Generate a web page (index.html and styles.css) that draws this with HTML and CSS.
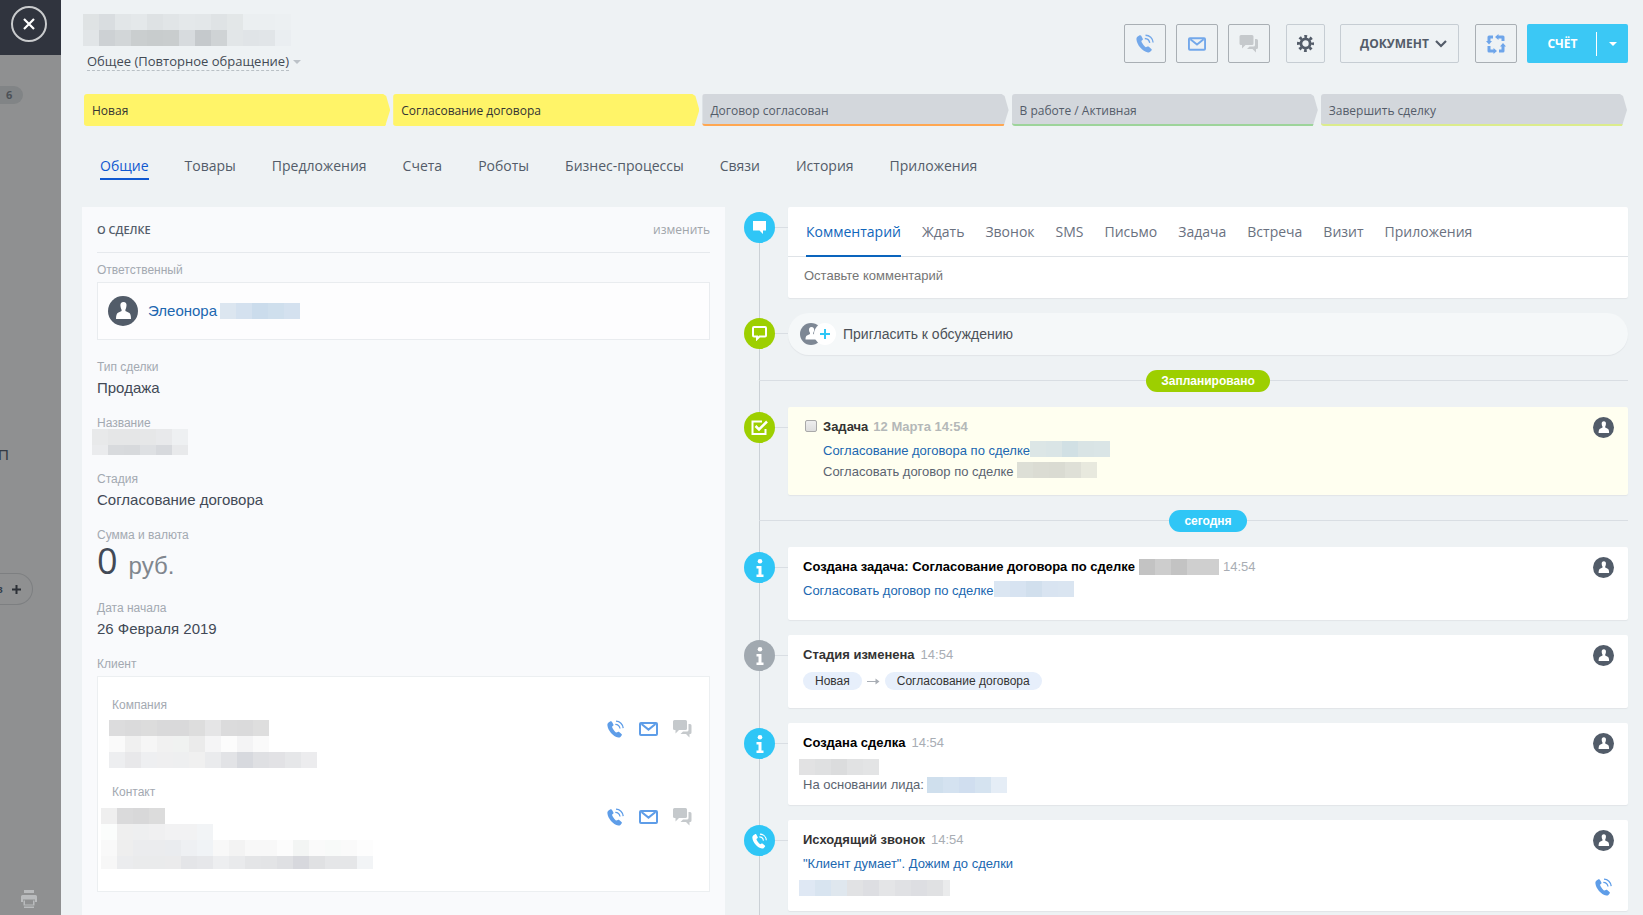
FILE: index.html
```html
<!DOCTYPE html>
<html lang="ru">
<head>
<meta charset="utf-8">
<title>Сделка</title>
<link rel="stylesheet" href="styles.css">
</head>
<body>
<svg class="sprite" aria-hidden="true">
  <symbol id="i-phone" viewBox="0 0 17 18">
    <path d="M1.600 2.400 3.400 1.300c.6-.3 1.200-.2 1.500.4l1.500 2.700c.3.5.2 1-.3 1.400L5 6.700c.2 1.300 2.700 5 4.300 5.900l1.500-.7c.5-.3 1-.2 1.400.2l2.300 2c.5.4.5 1 .1 1.500l-1.200 1.300c-.6.6-1.300.8-2.100.6C6 16.500.8 10.200.4 5.200.3 4 .7 3 1.600 2.400z" fill="currentColor"/>
    <path d="M9 1.200c3.800.1 6.900 2.900 7.200 6.900M8.300 4.300c2.500.1 4.300 1.800 4.700 4.200" fill="none" stroke="currentColor" stroke-width="1.300"/>
  </symbol>
  <symbol id="i-mail" viewBox="0 0 19 14">
    <rect x="1" y="1" width="17" height="12" rx="1" fill="none" stroke="currentColor" stroke-width="2"/>
    <path d="M2.500 2l7 5.600 7-5.600" fill="none" stroke="currentColor" stroke-width="2"/>
  </symbol>
  <symbol id="i-chat" viewBox="0 0 19 18">
    <path d="M1.500 0h11Q14 0 14 1.500v7Q14 10 12.500 10H6l-3.500 3.500V10H1.500Q0 10 0 8.500v-7Q0 0 1.500 0z" fill="currentColor"/>
    <path d="M15.500 4h1.500q1.500 0 1.500 1.500v7q0 1.500-1.500 1.500h-.5v3.500L13 14H7.500L10 11.500h4q1.500 0 1.500-1.500z" fill="currentColor"/>
  </symbol>
  <symbol id="i-user" viewBox="0 0 30 30">
    <circle cx="15" cy="15" r="15" fill="currentColor"/>
    <path d="M15.500 6c2.200 0 3.200 1.500 3 3.500-.1 2-.7 3.200-1.100 4.200v1.300l3.600 1.800c1.500.8 2 3 2 6.200H8c0-3.200.6-5.400 2-6.200l3.600-1.800v-1.300c-.5-1-1.100-2.200-1.200-4.200-.1-2 .9-3.500 3.100-3.500z" fill="#fff"/>
  </symbol>
  <symbol id="i-info" viewBox="0 0 10 18">
    <circle cx="5" cy="2.300" r="2.300" fill="currentColor"/>
    <path d="M1.500 7h5v8.500h2V18h-7v-2.500h2v-6h-2z" fill="currentColor"/>
  </symbol>
</svg>

<div class="app">
  <aside class="rail">
    <div class="rail-top">
      <button class="close" type="button" aria-label="Закрыть"><svg width="12" height="12" viewBox="0 0 12 12"><path d="M1 1l10 10M11 1L1 11" stroke="#fff" stroke-width="2.200"/></svg></button>
    </div>
    <span class="rail-badge">6</span>
    <span class="rail-letter">П</span>
    <span class="rail-pill"><b>в</b><svg width="9" height="9" viewBox="0 0 9 9"><path d="M4.500 0v9M0 4.500h9" stroke="#2d3037" stroke-width="2"/></svg></span>
    <svg class="rail-print" width="16" height="18" viewBox="0 0 16 18"><path d="M3 0h10v3H3zM1.500 5h13Q16 5 16 6.500V12h-2V9.500H2V12H0V6.500Q0 5 1.500 5zM2.500 10.500h1.500V14.500h8v-4h1.500V15.500h-11zM3 16.500h10V18H3z" fill="#b9bbbd"/></svg>
  </aside>

  <main class="page">
    <header class="head">
      <div class="head-title">
        <span class="mosaic" data-rows="dfe3e4 d9dde0 e2e6e8 e4e8ea dee2e4 e1e5e7 e4e8ea e3e7e9 dfe3e5 e3e7e8 ebeff1 ebeff1 ecf0f2|e1e5e7 cdd1d4 d2d6d8 cacecf c8cccd c9cdce d7dbde c5c9cc cfd3d5 e2e6e8 e0e4e7 e1e5e8 eaeef1"></span>
        <button class="funnel" type="button"><span>Общее (Повторное обращение)</span></button>
      </div>
      <div class="actions">
        <button class="btn btn-icon" type="button" aria-label="Позвонить"><svg class="c-blue" width="18" height="19"><use href="#i-phone"/></svg></button>
        <button class="btn btn-icon" type="button" aria-label="Письмо"><svg class="c-blue" width="18" height="14"><use href="#i-mail"/></svg></button>
        <button class="btn btn-icon" type="button" aria-label="Чат"><svg class="c-grey" width="20" height="18"><use href="#i-chat"/></svg></button>
        <button class="btn btn-gear" type="button" aria-label="Настройки"><svg width="17" height="17" viewBox="0 0 17 17"><circle cx="8.500" cy="8.500" r="4.600" fill="none" stroke="#535c69" stroke-width="2.800"/><circle cx="8.500" cy="8.500" r="7" fill="none" stroke="#535c69" stroke-width="3" stroke-dasharray="2.750 2.748" stroke-dashoffset="1.370"/></svg></button>
        <button class="btn btn-doc" type="button">ДОКУМЕНТ <svg width="12" height="8" viewBox="0 0 12 8"><path d="M1 1l5 5 5-5" fill="none" stroke="#535c69" stroke-width="2.200"/></svg></button>
        <button class="btn btn-icon btn-frame" type="button" aria-label="Автоматизация"><svg width="20" height="20" viewBox="0 0 20 20"><g fill="none" stroke="#6ea5ea" stroke-width="3" stroke-linejoin="round"><path d="M7 3H3V8"/><path d="M12 3h5V7"/><path d="M17 11v6H13"/><path d="M3 12v5H8"/></g><path d="M0 7h6L3 10.500zM12.500 0v6L9 3zM20 12.500h-6L17 9zM7.500 20v-6l3.500 3z" fill="#6ea5ea"/></svg></button>
        <div class="split"><button class="split-main" type="button">СЧЁТ</button><button class="split-more" type="button" aria-label="Ещё"></button></div>
      </div>
    </header>

    <div class="stages">
      <button class="stage stage-done" type="button">Новая</button>
      <button class="stage stage-done" type="button">Согласование договора</button>
      <button class="stage stage-orange" type="button">Договор согласован</button>
      <button class="stage stage-green" type="button">В работе / Активная</button>
      <button class="stage stage-lime" type="button">Завершить сделку</button>
    </div>

    <nav class="tabs">
      <a class="tab tab-active" href="#">Общие</a><a class="tab" href="#">Товары</a><a class="tab" href="#">Предложения</a><a class="tab" href="#">Счета</a><a class="tab" href="#">Роботы</a><a class="tab" href="#">Бизнес-процессы</a><a class="tab" href="#">Связи</a><a class="tab" href="#">История</a><a class="tab" href="#">Приложения</a>
    </nav>

    <div class="columns">
      <section class="deal">
        <div class="deal-head"><h2>О СДЕЛКЕ</h2><a href="#">изменить</a></div>
        <div class="field">
          <div class="label">Ответственный</div>
          <div class="owner"><svg class="c-dark" width="30" height="30"><use href="#i-user"/></svg><a href="#">Элеонора</a><span class="mosaic" data-rows="dce6f0 d4e1ef cbdcec cfdfed d4e1ef"></span></div>
        </div>
        <div class="field"><div class="label">Тип сделки</div><div class="value">Продажа</div></div>
        <div class="field"><div class="label">Название</div><div class="value value-hidden"><span class="mosaic" data-rows="e8e9ea e5e6e7 e5e6e7 e6e7e8 e8e9eb eef0f2|eaebed d8dadd d7d9dc dee0e3 d7d9dd e8e9eb"></span></div></div>
        <div class="field"><div class="label">Стадия</div><div class="value">Согласование договора</div></div>
        <div class="field"><div class="label">Сумма и валюта</div><div class="money"><span>0</span><small>руб.</small></div></div>
        <div class="field"><div class="label">Дата начала</div><div class="value">26 Февраля 2019</div></div>
        <div class="field">
          <div class="label">Клиент</div>
          <div class="client">
            <div class="label">Компания</div>
            <div class="client-row">
              <span class="mosaic" data-rows="dcdcdd dadadb dcdcdc d9d9da d9d9da dddddd e5e5e6 dbdbdc dadadb dedede|fafafa f0f0f0 f6f6f6 f1f1f1 f0f2f1 ebebeb f5f5f6 fcfcfc f4f4f5 fafafa|edeef0 e8e8ea eeeff1 efeff0 eeeff0 f0f0f0 eaebed e2e3e6 d7d9de dfe0e3 e2e2e5 e6e7e9 ececee"></span>
              <span class="contacts"><svg class="c-link" width="17" height="18"><use href="#i-phone"/></svg><svg class="c-link" width="19" height="14"><use href="#i-mail"/></svg><svg class="c-grey" width="19" height="18"><use href="#i-chat"/></svg></span>
            </div>
            <div class="label">Контакт</div>
            <div class="client-row client-row-wide">
              <span class="mosaic" data-rows="efefef dadadb d8d8d9 dcdcdc|fbfdfc efefef eeeff0 f0f0f1 f2f2f3 f2f2f3 f2f4f6|f9f9f9 eeeeee ebecee ebecee eaecef eef0f3 f0f3f6 f8f8f8 f3f3f3 f8f8f8 f8f8f8 fcfcfc f3f5f4 fafafa f8faf9 fafafa fdfdfd|f7f7f7 ebecee eaebec eaebec ebebec e4e5e8 e6e7ea edeef0 e9eaec e4e5e7 e3e4e6 dfe0e3 d7d8dd e0e1e3 e5e6e8 e5e6e8 f2f4f6"></span>
              <span class="contacts"><svg class="c-link" width="17" height="18"><use href="#i-phone"/></svg><svg class="c-link" width="19" height="14"><use href="#i-mail"/></svg><svg class="c-grey" width="19" height="18"><use href="#i-chat"/></svg></span>
            </div>
          </div>
        </div>
      </section>

      <section class="timeline">
        <div class="item">
          <span class="dot dot-blue"><svg width="13" height="13" viewBox="0 0 13 13"><path d="M0 0h13v9.500h-3V13L6.500 9.500H0z" fill="#fff"/></svg></span>
          <div class="card composer">
            <nav class="ctabs"><a class="ctab ctab-active" href="#">Комментарий</a><a class="ctab" href="#">Ждать</a><a class="ctab" href="#">Звонок</a><a class="ctab" href="#">SMS</a><a class="ctab" href="#">Письмо</a><a class="ctab" href="#">Задача</a><a class="ctab" href="#">Встреча</a><a class="ctab" href="#">Визит</a><a class="ctab" href="#">Приложения</a></nav>
            <input class="comment" type="text" placeholder="Оставьте комментарий" aria-label="Комментарий">
          </div>
        </div>
        <div class="item">
          <span class="dot dot-green"><svg width="15" height="15" viewBox="0 0 15 15"><path d="M2 1h11q1 0 1 1v7.500q0 1-1 1H7.500L5 13v-2.500H2q-1 0-1-1V2q0-1 1-1z" fill="none" stroke="#fff" stroke-width="2"/></svg></span>
          <button class="invite" type="button">
            <svg width="36" height="22" viewBox="0 0 36 22"><circle cx="11" cy="11" r="11" fill="#7d8794"/><path d="M11.500 4c2 0 2.800 1.500 2.600 3-.1 1.500-.6 2-.9 3v1l3 1.500c1.200.6 1.500 2 1.500 4H5.500c0-2 .4-3.400 1.500-4l3-1.500v-1c-.4-1-.9-1.500-1-3-.1-1.500.5-3 2.500-3z" fill="#fff"/><circle cx="25" cy="11" r="11" fill="#fff"/><path d="M25 6v10M20 11h10" stroke="#2fc6f6" stroke-width="2"/></svg>
            Пригласить к обсуждению
          </button>
        </div>
        <div class="divider"><span class="pill pill-green">Запланировано</span></div>
        <div class="item">
          <span class="dot dot-green"><svg width="17" height="16" viewBox="0 0 17 16"><path d="M11 1.500H1.500v12.500h13V9" fill="none" stroke="#fff" stroke-width="2"/><path d="M4.500 6l3.500 3.500L16 1.500" fill="none" stroke="#fff" stroke-width="2.500"/></svg></span>
          <div class="card card-task">
            <div class="task-check"><input type="checkbox" id="task"></div>
            <div class="body">
              <div class="title"><label for="task">Задача</label><time class="time-soft">12 Марта 14:54</time></div>
              <div class="line line-link"><a href="#">Согласование договора по сделке</a><span class="mosaic" data-rows="dce6e6 dae5e6 d1e0e4 d9e4e5 dae5e6"></span></div>
              <div class="line">Согласовать договор по сделке<span class="mosaic mosaic-near" data-rows="dddfd6 dbdcd3 dadbd2 dfe0d7 e8e9de"></span></div>
            </div>
            <svg class="c-dark avatar" width="21" height="21"><use href="#i-user"/></svg>
          </div>
        </div>
        <div class="divider"><span class="pill pill-blue">сегодня</span></div>
        <div class="item">
          <span class="dot dot-blue"><svg width="10" height="18"><use href="#i-info"/></svg></span>
          <div class="card card-info">
            <div class="body">
              <div class="title title-black">Создана задача: Согласование договора по сделке<span class="mosaic mosaic-gap" data-rows="c3c3c3 cdcdcd c3c3c3 cfcfcf cfcfcf"></span><time class="time-near">14:54</time></div>
              <div class="line line-link"><a href="#">Согласовать договор по сделке</a><span class="mosaic" data-rows="dbe6f2 d7e3f1 d1dfed d9e4f1 dae5f1"></span></div>
            </div>
            <svg class="c-dark avatar" width="21" height="21"><use href="#i-user"/></svg>
          </div>
        </div>
        <div class="item">
          <span class="dot dot-grey"><svg width="10" height="18"><use href="#i-info"/></svg></span>
          <div class="card card-info">
            <div class="body">
              <div class="title">Стадия изменена<time>14:54</time></div>
              <div class="move"><span class="chip">Новая</span><svg width="13" height="8" viewBox="0 0 13 8"><path d="M0 4.500h10" stroke="#a8adb4" fill="none"/><path d="M8.500 1.500l4 3-4 3z" fill="#a8adb4"/></svg><span class="chip">Согласование договора</span></div>
            </div>
            <svg class="c-dark avatar" width="21" height="21"><use href="#i-user"/></svg>
          </div>
        </div>
        <div class="item">
          <span class="dot dot-blue"><svg width="10" height="18"><use href="#i-info"/></svg></span>
          <div class="card card-created">
            <div class="body">
              <div class="title title-black">Создана сделка<time>14:54</time></div>
              <span class="mosaic mosaic-out" data-rows="e2e2e3 dfe0e1 dbdcdd e1e2e3 e3e4e5"></span>
              <div class="line line-tight">На основании лида:<span class="mosaic mosaic-near" data-rows="cfdfed d4e2f0 d0deef d5e3f0 e5edf6"></span></div>
            </div>
            <svg class="c-dark avatar" width="21" height="21"><use href="#i-user"/></svg>
          </div>
        </div>
        <div class="item">
          <span class="dot dot-blue"><svg class="c-white" width="15" height="16"><use href="#i-phone"/></svg></span>
          <div class="card card-call">
            <div class="body">
              <div class="title">Исходящий звонок<time>14:54</time></div>
              <div class="line line-link"><a href="#">"Клиент думает". Дожим до сделки</a></div>
              <span class="mosaic mosaic-out mosaic-call" data-rows="dfe8f4 d8e4f0 dfe7ee e1e2e4 dddee2 e4e5e7 e0e1e4 dddee2 e0e1e3 eaebec"></span>
            </div>
            <div class="side"><svg class="c-dark" width="21" height="21"><use href="#i-user"/></svg><svg class="c-link" width="17" height="18"><use href="#i-phone"/></svg></div>
          </div>
        </div>
      </section>
    </div>
  </main>
</div>
<script src="mosaic.js"></script>
</body>
</html>
```
FILE: styles.css
```css
* { box-sizing: border-box; }
body { margin: 0; font: 13px/18px "Liberation Sans", Arial, sans-serif; color: #333; }
button { font: inherit; color: inherit; border: 0; padding: 0; margin: 0; background: none; cursor: pointer; }
a { color: #2067b0; text-decoration: none; }
svg { display: block; flex: none; }
.sprite { position: absolute; width: 0; height: 0; }
.c-blue { color: #73a8ea; }
.c-link { color: #5e9de8; }
.c-grey { color: #c5c9cc; }
.c-dark { color: #525c69; }
.c-white { color: #fff; }

.mosaic { display: inline-flex; flex-direction: column; flex: none; }
.mosaic-row { display: flex; height: 16px; }
.mosaic-cell { width: 16px; }
.mosaic-gap { margin-left: 4px; }
.mosaic-near { margin-left: 3px; }
.mosaic-out { margin-left: -4px; }

.app { display: flex; height: 100vh; overflow: hidden; background: #eef2f4; }

.rail { width: 61px; flex: none; background: #8f9091; display: flex; flex-direction: column; align-items: flex-start; }
.rail-top { width: 100%; height: 55px; background: #30343e; padding: 6px 0 0 11px; }
.close { width: 36px; height: 36px; border: 2px solid #c9cbcd; border-radius: 50%; display: flex; align-items: center; justify-content: center; }
.rail-badge { margin-top: 31px; width: 23px; height: 18px; padding-left: 6px; border-radius: 0 9px 9px 0; background: #818486; font: bold 11px/18px "Open Sans", sans-serif; color: #4c5157; }
.rail-letter { margin: 342px 0 0 -2px; font-size: 15px; line-height: 18px; color: #333a44; }
.rail-pill { margin-top: 109px; width: 33px; height: 32px; border: 1px solid #7d7f81; border-left: 0; border-radius: 0 16px 16px 0; display: flex; align-items: center; gap: 9px; font-size: 11px; color: #33404e; }
.rail-pill b { margin-left: -4px; }
.rail-print { margin: auto 0 7px 21px; }

.page { flex: 1; min-width: 0; padding: 0 15px 0 21px; display: flex; flex-direction: column; }
.head { display: flex; justify-content: space-between; height: 94px; padding: 14px 0 0 1px; }
.head-title { display: flex; flex-direction: column; align-items: flex-start; gap: 7px; }
.funnel { margin-left: 4px; display: flex; align-items: center; gap: 4px; font: 13px/17px "Open Sans", sans-serif; color: #434a54; }
.funnel span { border-bottom: 1px dashed #b9c0c5; }
.funnel::after { content: ""; border: 4px solid transparent; border-top-color: #bcc2c8; border-bottom: 0; }

.actions { display: flex; height: 39px; margin-top: 10px; }
.btn { height: 39px; border: 1px solid #c6cdd3; border-radius: 2px; display: flex; align-items: center; justify-content: center; }
.btn-icon { width: 42px; border-color: #a9afb4; margin-right: 10px; }
.btn-gear { width: 39px; margin: 0 15px 0 6px; }
.btn-doc { width: 119px; gap: 6px; padding-left: 8px; font: bold 12px/18px "Open Sans", sans-serif; color: #535c69; }
.btn-frame { margin-left: 16px; }
.split { width: 101px; display: flex; align-items: center; border-radius: 2px; background: #3bc8f5; color: #fff; }
.split-main { flex: 1; height: 100%; padding-left: 2px; font: bold 12px/18px "Open Sans", sans-serif; }
.split-more { width: 32px; height: 24px; border-left: 1px solid #fff; display: flex; align-items: center; justify-content: center; }
.split-more::after { content: ""; border: 4px solid transparent; border-top-color: #fff; border-bottom: 0; }

.stages { display: grid; grid-template-columns: repeat(5, 1fr); gap: 3px; padding: 0 1px 0 2px; }
.stage { height: 32px; padding: 3px 8px 0; text-align: left; font: 12px/27px "Open Sans", sans-serif; color: #535c69; background: #d3d7dc; border-bottom: 2px solid; border-radius: 3px 0 0 3px; clip-path: polygon(0 0, calc(100% - 7px) 0, calc(100% - 4px) 2px, 100% 50%, calc(100% - 5px) 100%, 0 100%); }
.stage-done { background: #fff468; border-color: #fff468; color: #333; }
.stage-orange { border-color: #ffa751; }
.stage-green { border-color: #9dd49a; }
.stage-lime { border-color: #dbec8c; }

.tabs { display: flex; gap: 36px; margin: 28px 0 27px 18px; }
.tab { font: 14px/24px "Open Sans", sans-serif; color: #535c69; border-bottom: 2px solid transparent; }
.tab-active { color: #1058d0; border-color: #1058d0; }

.columns { flex: 1; min-height: 0; display: grid; grid-template-columns: 643fr 884fr; gap: 19px; }
.deal { background: #f9fafc; padding: 0 15px; min-width: 0; }
.deal-head { display: flex; justify-content: space-between; align-items: center; height: 46px; border-bottom: 1px solid #e6e9ed; margin-bottom: 9px; }
.deal-head h2 { margin: 0; font: 600 11px/18px "Open Sans", sans-serif; color: #535c69; }
.deal-head a { font: 12px/18px "Open Sans", sans-serif; color: #a0a5aa; }
.field { margin-bottom: 17px; }
.label { font-size: 12px; line-height: 16px; color: #a3a9b1; }
.value { margin-top: 3px; font-size: 15px; line-height: 20px; color: #424956; }
.value-hidden { display: flex; align-items: flex-start; height: 20px; }
.value-hidden .mosaic { margin: -5px 0 0 -5px; }
.value-hidden .mosaic-row:last-child { height: 10px; }
.money { display: flex; align-items: baseline; gap: 11px; height: 40px; font: 36px/36px "Open Sans", sans-serif; color: #424956; }
.money small { font: 24px/24px "Liberation Sans", Arial, sans-serif; color: #80868e; }
.owner { display: flex; align-items: center; height: 58px; margin: 4px 0 19px; padding: 0 10px; border: 1px solid #e9ecef; background: #fdfdfe; font-size: 15px; }
.owner a { margin: 0 3px 0 10px; }
.client { margin-top: 4px; padding: 20px 18px 22px 14px; border: 1px solid #eceff1; background: #fff; }
.client-row { display: flex; justify-content: space-between; align-items: flex-start; margin: 7px 0 16px -3px; }
.client-row-wide { margin: 8px 0 0 -11px; }
.client-row-wide .mosaic-row:last-child { height: 13px; }
.contacts { display: flex; align-items: center; gap: 15px; margin-right: -1px; }

.timeline { position: relative; display: flex; flex-direction: column; gap: 15px; min-width: 0; }
.timeline::before { content: ""; position: absolute; left: 15px; top: 20px; bottom: 0; width: 1px; background: #cbd1d6; }
.item { position: relative; display: grid; grid-template-columns: 31px minmax(0, 1fr); column-gap: 13px; }
.item::before { content: ""; position: absolute; left: 31px; top: 20px; width: 13px; height: 1px; background: #d9dee3; }
.dot { position: relative; width: 31px; height: 31px; margin-top: 5px; border-radius: 50%; color: #fff; display: flex; align-items: center; justify-content: center; }
.dot-blue { background: #2fc6f6; }
.dot-green { background: #9dcf00; }
.dot-grey { background: #a1a9b0; }
.card { display: flex; border-radius: 2px; background: #fff; padding: 10px 14px 0 15px; box-shadow: 0 1px 1px #e1e5e8; }
.body { flex: 1; min-width: 0; padding-top: 1px; }

.composer { flex-direction: column; padding: 0; }
.ctabs { display: flex; gap: 21px; padding: 0 18px; height: 50px; border-bottom: 1px solid #dfe3e7; }
.ctab { height: 50px; font: 14px/50px "Open Sans", sans-serif; color: #6a7180; border-bottom: 2px solid transparent; }
.ctab-active { color: #1066bb; border-color: #0a64bd; }
.comment { height: 41px; width: 100%; border: 0; padding: 0 16px 4px; background: none; font: 13px/18px "Liberation Sans", Arial, sans-serif; }
.comment::placeholder { color: #757575; opacity: 1; }
.invite { height: 42px; padding: 0 12px; border-radius: 21px; background: #f5f8f9; box-shadow: 0 1px 1px #e1e5e8; display: flex; align-items: center; gap: 7px; font-size: 14px; color: #4c5158; }

.divider { position: relative; height: 22px; margin-left: 15px; padding-left: 29px; display: flex; justify-content: center; background: linear-gradient(#d9dee3, #d9dee3) 0 10px / 100% 1px no-repeat; }
.pill { padding: 0 15px; border-radius: 11px; color: #fff; font-weight: bold; font-size: 12px; line-height: 22px; }
.pill-green { background: #9dcf00; }
.pill-blue { background: #2fc6f6; }

.title { display: flex; align-items: center; font-weight: bold; height: 18px; }
.title-black { color: #000; }
.title time { margin-left: 6px; font-weight: normal; color: #a8adb4; }
.title .time-soft { margin-left: 5px; font-weight: bold; color: #b4b8b8; }
.title .time-near { margin-left: 4px; }
.line { display: flex; align-items: center; height: 21px; color: #5b6470; }
.line-link { margin-top: 4px; }
.line .mosaic { margin-bottom: 4px; }
.line-tight { height: 20px; }
.line-tight .mosaic { margin-bottom: 0; }
.card-task { height: 88px; background: #fffff0; }
.task-check { width: 20px; flex: none; padding: 3px 0 0 2px; }
.task-check input { appearance: none; display: block; margin: 0; width: 12px; height: 12px; border: 1px solid #a9a9a9; border-radius: 2px; background: linear-gradient(#eee, #ddd); }
.avatar { margin: 0; }
.card-info { height: 73px; }
.card-created { height: 82px; }
.card-created .mosaic-out { display: flex; margin-top: 7px; }
.card-call { height: 91px; }
.mosaic-call { margin-top: 6px; }
.mosaic-call .mosaic-cell:last-child { width: 7px; }
.side { display: flex; flex-direction: column; align-items: center; gap: 27px; }
.move { display: flex; align-items: center; gap: 5px; margin-top: 8px; }
.chip { padding: 0 12px; border-radius: 9px; background: #e7effb; font-size: 12px; line-height: 18px; }
```
FILE: mosaic.js
```js
// Fills each placeholder block with rows of coloured cells.
document.querySelectorAll(".mosaic").forEach(function (box) {
  box.dataset.rows.split("|").forEach(function (colors) {
    var row = document.createElement("span");
    row.className = "mosaic-row";
    colors.split(" ").forEach(function (color) {
      var cell = document.createElement("span");
      cell.className = "mosaic-cell";
      cell.style.background = "#" + color;
      row.appendChild(cell);
    });
    box.appendChild(row);
  });
});
```
